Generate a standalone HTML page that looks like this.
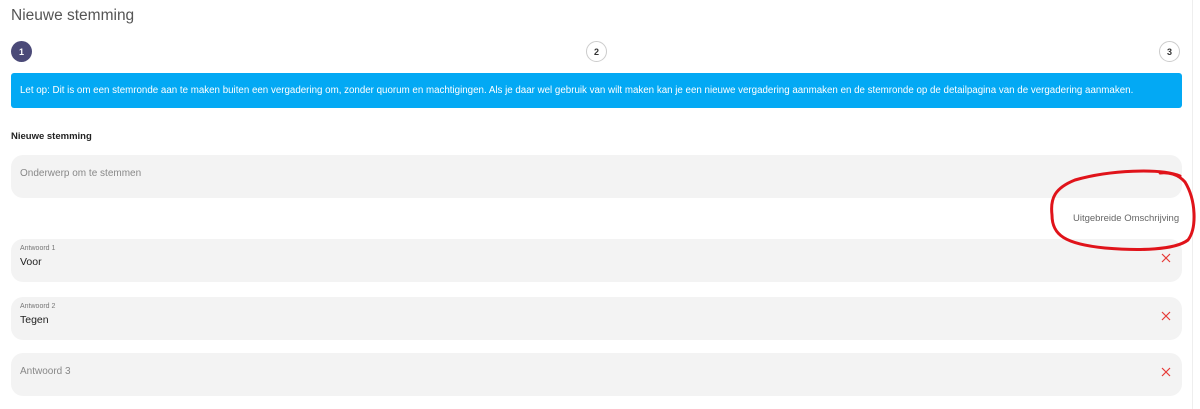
<!DOCTYPE html>
<html><head><meta charset="utf-8"><style>
*{margin:0;padding:0;box-sizing:border-box}
body{width:1200px;height:409px;background:#fff;font-family:"Liberation Sans",Arial,sans-serif;position:relative;overflow:hidden;color:#333}
.abs{position:absolute}
.title{left:11px;top:7px;font-size:15.5px;color:#555}
.step{width:21px;height:21px;border-radius:50%;top:41px;font-size:9px;font-weight:bold;display:flex;align-items:center;justify-content:center}
.s1{left:11px;background:#4b4a78;color:#fff}
.s2{border:1.5px solid #ccc;color:#333;background:#fff}
.alert{left:11px;top:73px;width:1171px;height:35px;background:#03a9f4;border-radius:3px;color:#fff;font-size:9.75px;padding:12px 0 0 9px;white-space:nowrap}
.lbl{left:11px;top:131px;font-size:9.5px;font-weight:bold;color:#222}
.field{left:11px;width:1171px;height:43px;background:#f3f3f3;border-radius:12px}
.ph{position:absolute;left:9px;font-size:10px;color:#888}
.small{position:absolute;left:9px;top:6px;font-size:7px;color:#777}
.val{position:absolute;left:9px;top:17px;font-size:10.5px;color:#222}
.x{position:absolute;left:1150px;top:14px;width:10px;height:10px}
.ext{left:1073px;top:213px;font-size:9.5px;color:#666}
.vline{left:1192px;top:0;width:1px;height:409px;background:#eee}
</style></head><body>
<div class="abs vline"></div>
<div class="abs title">Nieuwe stemming</div>
<div class="abs step s1">1</div>
<div class="abs step s2" style="left:586px">2</div>
<div class="abs step s2" style="left:1159px">3</div>
<div class="abs alert">Let op: Dit is om een stemronde aan te maken buiten een vergadering om, zonder quorum en machtigingen. Als je daar wel gebruik van wilt maken kan je een nieuwe vergadering aanmaken en de stemronde op de detailpagina van de vergadering aanmaken.</div>
<div class="abs lbl">Nieuwe stemming</div>
<div class="abs field" style="top:155px"><span class="ph" style="top:13px">Onderwerp om te stemmen</span></div>
<div class="abs ext">Uitgebreide Omschrijving</div>
<div class="abs field" style="top:239px"><span class="small">Antwoord 1</span><span class="val">Voor</span><svg class="x" viewBox="0 0 10 10"><path d="M1,1L9,9M9,1L1,9" stroke="#e53935" stroke-width="1.2"/></svg></div>
<div class="abs field" style="top:297px"><span class="small">Antwoord 2</span><span class="val">Tegen</span><svg class="x" viewBox="0 0 10 10"><path d="M1,1L9,9M9,1L1,9" stroke="#e53935" stroke-width="1.2"/></svg></div>
<div class="abs field" style="top:353px"><span class="ph" style="top:13px">Antwoord 3</span><svg class="x" viewBox="0 0 10 10"><path d="M1,1L9,9M9,1L1,9" stroke="#e53935" stroke-width="1.2"/></svg></div>
<svg class="abs" style="left:0;top:0" width="1200" height="409"><path d="M1180,176 C1160,168 1110,170 1075,180 C1055,188 1050,198 1052,215 C1052,235 1065,244 1105,248 C1140,251 1175,250 1188,240 C1197,228 1196,200 1185,182 C1178,174 1168,172 1160,173" fill="none" stroke="#e0131a" stroke-width="3" stroke-linecap="round"/></svg>
</body></html>
